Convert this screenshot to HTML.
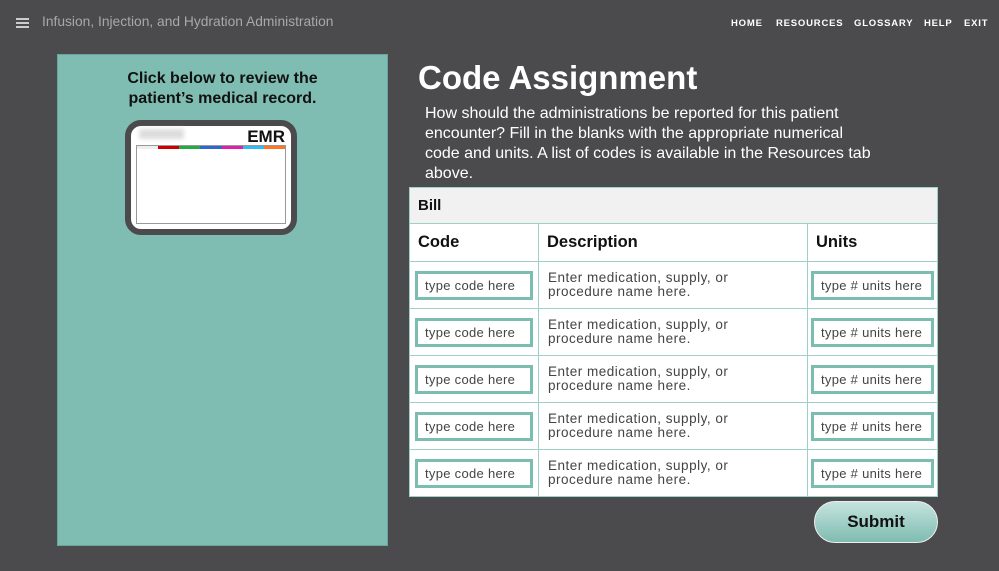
<!DOCTYPE html>
<html><head><style>
*{margin:0;padding:0;box-sizing:border-box}
body{width:999px;height:571px;background:#4b4b4d;font-family:"Liberation Sans",sans-serif;position:relative;overflow:hidden}
.abs{position:absolute}
.ham{left:16px;top:18px;width:13px}
.ham div{height:2px;background:#ccc;margin-bottom:2px}
.title{left:42px;top:14px;color:#a8a8a8;font-size:13.8px}
.nav{top:18px;color:#fff;font-size:9.5px;font-weight:bold;letter-spacing:0.8px}
.panel{left:57px;top:54px;width:331px;height:492px;background:#7fbcb1;border:1px solid #6aa59b}
.ptext{left:57px;top:69px;width:331px;text-align:center;font-weight:bold;font-size:16px;line-height:20px;color:#111}
.emr{left:125px;top:120px;width:172px;height:115px;border:6px solid #4b4b4d;border-radius:16px;background:#fff}
.q{left:425px;top:104px;width:453px;color:#fff;font-size:16px;line-height:20px}
table{position:absolute;left:409px;top:187px;width:529px;border-collapse:collapse;background:#fff}
td{border:1px solid #9fd0c6;font-size:13.5px;color:#444;padding:0 6px}
.bill td{background:#f1f1f1;height:36px;font-weight:bold;color:#111;font-size:15px;padding-left:8px}
.hd td{height:38px;font-weight:bold;color:#111;font-size:16.5px;padding-left:8px}
.r td{height:47px;line-height:14px;letter-spacing:0.5px}
.r td.d{padding-left:9px}
.in{border:3px solid #7cbdb1;height:29px;font-size:13px;color:#444;padding:5px 7px;white-space:nowrap;letter-spacing:0.3px}
.btn{left:814px;top:501px;width:124px;height:42px;border-radius:21px;background:linear-gradient(#c5e4de,#7fbcb1);border:1px solid #eee;text-align:center;line-height:40px;font-weight:bold;font-size:17px;color:#111}
</style></head><body>
<div class="abs ham"><div></div><div></div><div></div></div>
<div class="abs title">Infusion, Injection, and Hydration Administration</div>
<div class="abs nav" style="left:731px">HOME</div>
<div class="abs nav" style="left:776px">RESOURCES</div>
<div class="abs nav" style="left:854px">GLOSSARY</div>
<div class="abs nav" style="left:924px">HELP</div>
<div class="abs nav" style="left:964px">EXIT</div>
<div class="abs panel"></div>
<div class="abs ptext">Click below to review the<br>patient’s medical record.</div>
<div class="abs emr">
 <div class="abs" style="left:8px;top:3px;width:45px;height:10px;background:#ddd;filter:blur(2px)"></div>
 <div class="abs" style="right:6px;top:1px;font-weight:bold;font-size:17px;color:#111">EMR</div>
 <div class="abs" style="left:5px;top:19px;width:150px;height:79px;border:1px solid #999">
  <div style="height:3px;display:flex"><div style="flex:1;background:#eee"></div><div style="flex:1;background:#c00"></div><div style="flex:1;background:#2a4"></div><div style="flex:1;background:#36c"></div><div style="flex:1;background:#d2a"></div><div style="flex:1;background:#3be"></div><div style="flex:1;background:#f72"></div></div>
 </div>
</div>
<div class="abs" style="left:418px;top:59px;color:#fff;font-size:33px;font-weight:bold">Code Assignment</div>
<div class="abs q">How should the administrations be reported for this patient encounter? Fill in the blanks with the appropriate numerical code and units. A list of codes is available in the Resources tab above.</div>
<table>
<tr class="bill"><td colspan="3">Bill</td></tr>
<tr class="hd"><td style="width:129px">Code</td><td style="width:269px">Description</td><td>Units</td></tr>
<tr class="r"><td style="padding:0 5px"><div class="in">type code here</div></td><td class="d">Enter medication, supply, or<br>procedure name here.</td><td style="padding:0 3px"><div class="in">type # units here</div></td></tr>
<tr class="r"><td style="padding:0 5px"><div class="in">type code here</div></td><td class="d">Enter medication, supply, or<br>procedure name here.</td><td style="padding:0 3px"><div class="in">type # units here</div></td></tr>
<tr class="r"><td style="padding:0 5px"><div class="in">type code here</div></td><td class="d">Enter medication, supply, or<br>procedure name here.</td><td style="padding:0 3px"><div class="in">type # units here</div></td></tr>
<tr class="r"><td style="padding:0 5px"><div class="in">type code here</div></td><td class="d">Enter medication, supply, or<br>procedure name here.</td><td style="padding:0 3px"><div class="in">type # units here</div></td></tr>
<tr class="r"><td style="padding:0 5px"><div class="in">type code here</div></td><td class="d">Enter medication, supply, or<br>procedure name here.</td><td style="padding:0 3px"><div class="in">type # units here</div></td></tr>
</table>
<div class="abs btn">Submit</div>
</body></html>
